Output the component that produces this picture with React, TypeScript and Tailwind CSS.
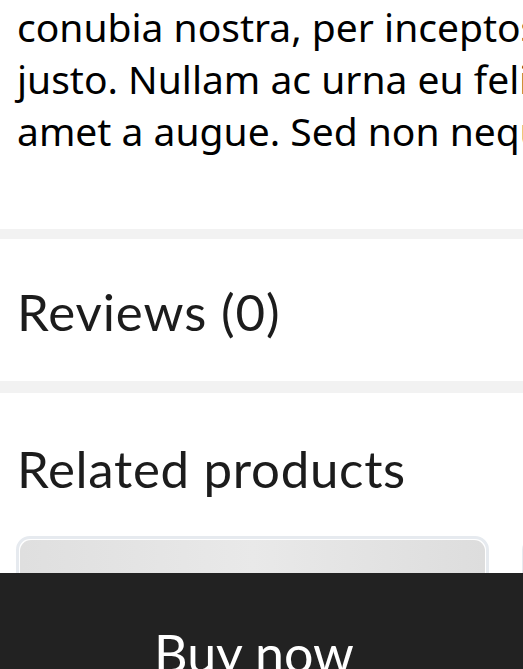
export default function App() {
  return (
    <div className="relative h-[669px] overflow-hidden bg-white">
      {/* Description tail */}
      <section className="px-[17px] pt-[1px] font-['Noto_Sans',sans-serif] text-[39px] leading-[52px] text-black whitespace-nowrap">
        <p>conubia nostra, per inceptos himenaeos.</p>
        <p>justo. Nullam ac urna eu felis dapibus</p>
        <p>amet a augue. Sed non neque elit.</p>
      </section>

      <div className="mt-[72px] h-[10px] bg-[#f2f2f2]" />

      <section className="h-[142px] px-[17px] flex items-center pt-[3px]">
        <h2 className="font-['Lato',sans-serif] text-[51px] leading-none tracking-[0.9px] text-[#1c1c1c]">Reviews (0)</h2>
      </section>

      <div className="h-[12px] bg-[#f2f2f2]" />

      <section className="px-[16px] pt-[50px]">
        <h2 className="pl-[1px] font-['Lato',sans-serif] text-[51px] leading-none tracking-[0.7px] text-[#1c1c1c]">Related products</h2>
        <div className="mt-[42px] flex gap-[33px]">
          <div className="w-[473px] shrink-0 rounded-[14px] border-[3px] border-[#e6eaef] bg-white p-[1px]">
            <div className="h-[300px] rounded-[11px] bg-gradient-to-r from-[#dfdfdf] via-[#e9e9e9] to-[#dddddd]" />
          </div>
          <div className="w-[473px] shrink-0 rounded-[14px] border-[3px] border-[#e6eaef] bg-white" />
        </div>
      </section>

      {/* Sticky buy bar */}
      <div className="absolute left-0 right-0 top-[573px] h-[140px] bg-[#222222] flex justify-center pt-[54px] pr-[15px]">
        <span className="font-['Lato',sans-serif] text-[52px] leading-none text-white">Buy now</span>
      </div>
    </div>
  );
}
